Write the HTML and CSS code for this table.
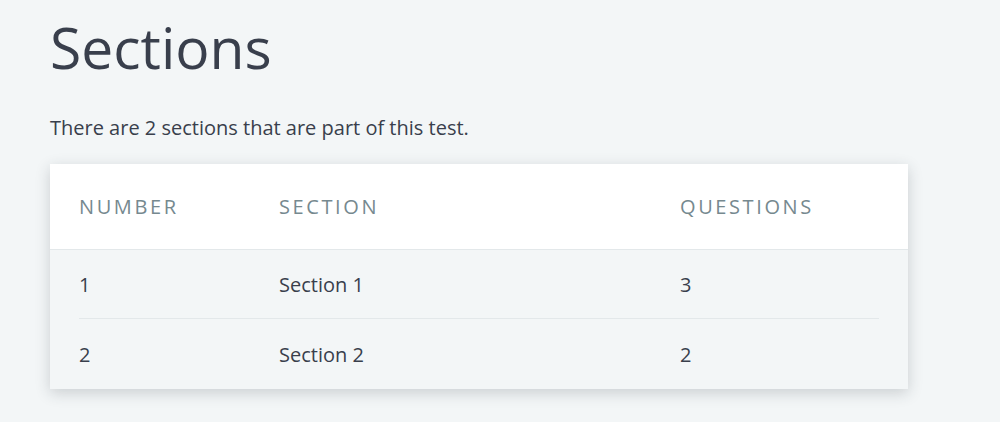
FILE: index.html
```html
<!DOCTYPE html>
<html lang="en">
<head>
<meta charset="utf-8">
<link rel="stylesheet" href="styles.css">
</head>
<body>
<main class="page">
  <h1 class="title">Sections</h1>
  <p class="intro">There are 2 sections that are part of this test.</p>
  <div class="card">
    <table class="table">
      <thead>
        <tr>
          <th class="col-num">Number</th>
          <th class="col-sec">Section</th>
          <th class="col-q">Questions</th>
        </tr>
      </thead>
      <tbody>
        <tr>
          <td>1</td>
          <td>Section 1</td>
          <td>3</td>
        </tr>
        <tr class="row-sep">
          <td>2</td>
          <td>Section 2</td>
          <td>2</td>
        </tr>
      </tbody>
    </table>
  </div>
</main>
</body>
</html>
```

FILE: styles.css
```css
* { box-sizing: border-box; }
html, body {
  margin: 0;
  padding: 0;
  background: #f3f6f7;
  font-family: "Open Sans", "Liberation Sans", sans-serif;
  color: #393f4c;
}
.page {
  padding: 12px 0 40px 50px;
  width: 908px;
}
.title {
  margin: 0;
  font-size: 57px;
  font-weight: 400;
  line-height: 70px;
  color: #393f4c;
}
.intro {
  margin: 33px 0 0;
  font-size: 20px;
  line-height: 26px;
}
.card {
  margin-top: 23px;
  background: #f3f6f7;
  box-shadow: 0 4px 14px rgba(40, 50, 60, 0.2);
}
.table {
  width: 100%;
  border-collapse: collapse;
}
.table th {
  background: #fff;
  text-align: left;
  font-weight: 400;
  font-size: 20px;
  letter-spacing: 2.6px;
  text-transform: uppercase;
  color: #76898f;
  height: 85px;
  padding: 0 0 0 29px;
  border-bottom: 1px solid #e3e8ea;
}
.col-num { width: 200px; }
.col-sec { width: 401px; }
.table th:last-child { padding-right: 29px; }
.table td {
  font-size: 20px;
  height: 70px;
  padding: 0 0 0 29px;
  position: relative;
}
.row-sep td::before {
  content: "";
  position: absolute;
  left: 0;
  right: 0;
  top: -1px;
  border-top: 1px solid #e3e8ea;
}
.row-sep td:first-child::before { left: 29px; }
.row-sep td:last-child::before { right: 29px; }
```
